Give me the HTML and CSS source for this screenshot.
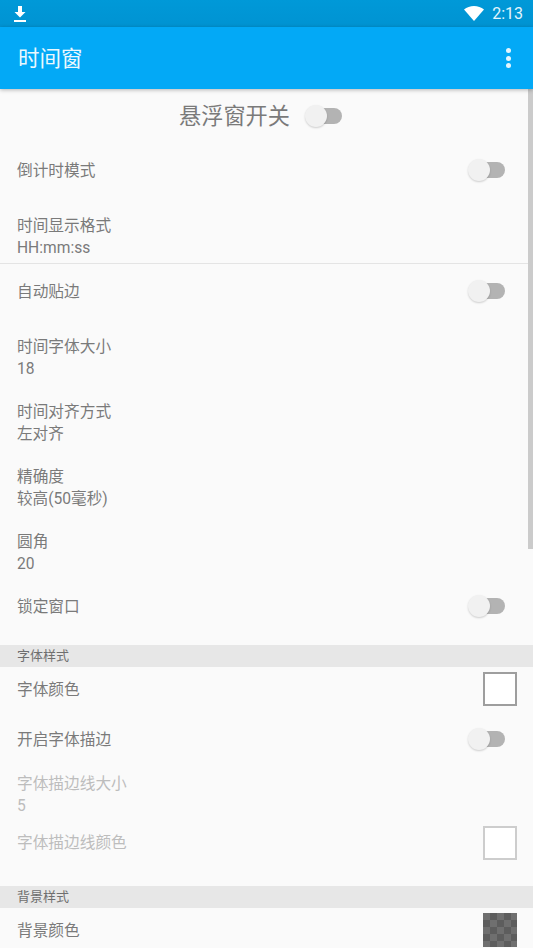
FILE: index.html
```html
<!DOCTYPE html>
<html>
<head>
    <meta charset="UTF-8">
    <meta name="viewport" content="width=device-width, initial-scale=1.0">
    <title>时间窗</title>
    <link rel="stylesheet" href="styles.css">
</head>
<body>
    <div class="status-bar">
        <svg class="download-icon" width="14" height="18" viewBox="0 0 14 18">
            <path d="M5 1h4v6h3.500L7 12.500 1.500 7H5z" fill="#fff"/>
            <rect x="1" y="15" width="12" height="2" fill="#fff"/>
        </svg>
        <div class="status-right">
            <svg width="20" height="15" viewBox="0 0 20 15">
                <path d="M0 3.500C2.800 1.200 6.200 0 10 0s7.200 1.200 10 3.500L10 15z" fill="#fff"/>
            </svg>
            <span class="clock">2:13</span>
        </div>
    </div>

    <div class="app-bar">
        <span class="app-title">时间窗</span>
        <div class="more-btn"><i></i><i></i><i></i></div>
    </div>

    <div class="content">
        <div class="scroll-thumb"></div>

        <div class="master-row">
            <span class="master-label">悬浮窗开关</span>
            <div class="switch"></div>
        </div>

        <div class="row row-single">
            <span class="label">倒计时模式</span>
            <div class="switch"></div>
        </div>
        <div class="row-double row-format">
            <div class="label">时间显示格式</div>
            <div class="value">HH:mm:ss</div>
        </div>
        <div class="divider"></div>
        <div class="row row-single">
            <span class="label">自动贴边</span>
            <div class="switch"></div>
        </div>
        <div class="row-double">
            <div class="label">时间字体大小</div>
            <div class="value">18</div>
        </div>
        <div class="row-double">
            <div class="label">时间对齐方式</div>
            <div class="value">左对齐</div>
        </div>
        <div class="row-double">
            <div class="label">精确度</div>
            <div class="value">较高(50毫秒)</div>
        </div>
        <div class="row-double">
            <div class="label">圆角</div>
            <div class="value">20</div>
        </div>
        <div class="row row-lock">
            <span class="label">锁定窗口</span>
            <div class="switch"></div>
        </div>

        <div class="section">字体样式</div>
        <div class="row row-color">
            <span class="label">字体颜色</span>
            <div class="swatch"></div>
        </div>
        <div class="row row-stroke">
            <span class="label">开启字体描边</span>
            <div class="switch"></div>
        </div>
        <div class="row-double row-disabled row-stroke-size">
            <div class="label">字体描边线大小</div>
            <div class="value">5</div>
        </div>
        <div class="row row-disabled row-stroke-color">
            <span class="label">字体描边线颜色</span>
            <div class="swatch"></div>
        </div>

        <div class="section">背景样式</div>
        <div class="row row-color">
            <span class="label">背景颜色</span>
            <div class="swatch swatch-checker"></div>
        </div>
    </div>
</body>
</html>
```

FILE: styles.css
```css
* {
    box-sizing: border-box;
    margin: 0;
    padding: 0;
}

html, body {
    height: 948px;
    overflow: hidden;
}

body {
    background: #fafafa;
    font-family: Roboto, "Noto Sans CJK SC", sans-serif;
    color: #7a7a7a;
}

.status-bar {
    height: 27px;
    background: linear-gradient(#0099d8, #0093d2);
    display: flex;
    align-items: center;
    justify-content: space-between;
    padding: 0 10px 0 13px;
}

.download-icon {
    display: block;
}

.status-right {
    display: flex;
    align-items: center;
    gap: 8px;
}

.clock {
    color: #e3f5fd;
    font-size: 16px;
    line-height: 27px;
}

.app-bar {
    position: relative;
    z-index: 2;
    height: 62px;
    background: #03a9f6;
    box-shadow: 0 1px 4px rgba(0,0,0,0.28);
    display: flex;
    align-items: center;
    justify-content: space-between;
    padding: 0 22px 0 18px;
}

.app-title {
    color: #eaf8fe;
    font-size: 21.500px;
    margin-bottom: 4px;
}

.more-btn {
    display: flex;
    flex-direction: column;
    gap: 2.500px;
}

.more-btn i {
    display: block;
    width: 5px;
    height: 5px;
    border-radius: 50%;
    background: #e3f5fd;
}

.content {
    position: relative;
    height: 859px;
    overflow: hidden;
}

.scroll-thumb {
    position: absolute;
    top: 0;
    right: 0;
    width: 5px;
    height: 460px;
    background: #cbcbcb;
}

.master-row {
    height: 54px;
    display: flex;
    align-items: center;
    justify-content: center;
    gap: 15px;
}

.master-label {
    font-size: 22.200px;
    line-height: 30px;
}

.row {
    display: flex;
    align-items: center;
    justify-content: space-between;
    padding: 0 16px 0 17px;
}

.row-single {
    height: 54px;
}

.row-lock {
    height: 54px;
    margin-top: 1px;
    margin-bottom: 12px;
}

.row-color {
    height: 44px;
}

.row-stroke {
    height: 56px;
}

.row-stroke-color {
    height: 59px;
    margin-bottom: 14px;
}

.row-double {
    height: 65px;
    padding: 17px 17px 0;
}

.row-format {
    height: 66px;
}

.row-stroke-size {
    height: 46px;
    padding-top: 5px;
}

.label {
    font-size: 15.700px;
    line-height: 23px;
}

.value {
    font-size: 15.600px;
    line-height: 22px;
}

.row-disabled .label,
.row-disabled .value {
    color: #bdbdbd;
}

.divider {
    height: 1px;
    background: #e4e4e4;
}

.switch {
    position: relative;
    width: 37px;
    height: 22px;
    margin-right: 12px;
    flex-shrink: 0;
}

.switch::before {
    content: "";
    position: absolute;
    left: 2px;
    right: 0;
    top: 3px;
    height: 16px;
    border-radius: 8px;
    background: #b3b3b3;
}

.switch::after {
    content: "";
    position: absolute;
    left: 0;
    top: 0;
    width: 22px;
    height: 22px;
    border-radius: 50%;
    background: #f1f1f1;
    box-shadow: 0 1px 2px rgba(0,0,0,0.18);
}

.section {
    height: 22px;
    background: #e7e7e7;
    padding-left: 17px;
    font-size: 13px;
    line-height: 22px;
    color: #6f6f6f;
}

.swatch {
    width: 34px;
    height: 34px;
    background: #fff;
    border: 2px solid #9e9e9e;
    flex-shrink: 0;
}

.row-disabled .swatch {
    border-color: #cdcdcd;
}

.swatch-checker {
    border: 0;
    background-color: #666;
    background-image: conic-gradient(#5d5d5d 25%, #6f6f6f 0 50%, #5d5d5d 0 75%, #6f6f6f 0);
    background-size: 14px 14px;
}
```
